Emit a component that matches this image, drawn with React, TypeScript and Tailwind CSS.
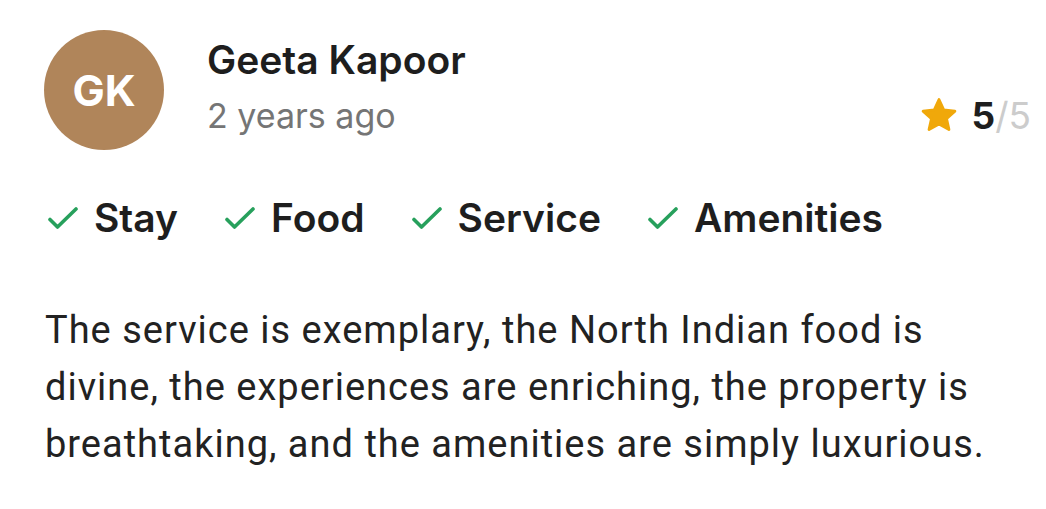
const TAGS = ['Stay', 'Food', 'Service', 'Amenities']

function Tick() {
  return (
    <svg viewBox="0 0 30 24" className="w-[30px] h-[24px] shrink-0">
      <path
        d="M2 13.5l7.5 7.5L28 3"
        fill="none"
        stroke="#27a05c"
        strokeWidth="3.6"
        strokeLinecap="round"
        strokeLinejoin="round"
      />
    </svg>
  )
}

export default function App() {
  return (
    <div className="w-[1046px] h-[509px] bg-white font-['Inter','Noto_Sans',sans-serif]">
      <div className="pl-[44px] pr-[15px] pt-[30px]">
        {/* Reviewer header */}
        <div className="flex items-start">
          <div className="w-[120px] h-[120px] rounded-full bg-[#b0855a] flex items-center justify-center shrink-0">
            <span className="text-white font-bold text-[43px] leading-none">GK</span>
          </div>
          <div className="flex-1 ml-[43px] pt-[6px]">
            <div className="text-[#1e1e1e] font-semibold text-[39px] leading-[48px]">Geeta Kapoor</div>
            <div className="flex items-center justify-between mt-[10px]">
              <span className="text-[#757575] text-[34px] leading-[44px]">2 years ago</span>
              <div className="flex items-center gap-[12px]">
                <svg viewBox="0 0 24 24" className="w-[42px] h-[42px]">
                  <path
                    d="M12 2.6l2.7 5.9 6.4.7-4.8 4.3 1.4 6.3L12 16.6l-5.7 3.2 1.4-6.3-4.8-4.3 6.4-.7z"
                    fill="#f0a80a"
                    stroke="#f0a80a"
                    strokeWidth="1.6"
                    strokeLinejoin="round"
                  />
                </svg>
                <span className="text-[37px] leading-[44px]">
                  <span className="font-bold text-[#1e1e1e]">5</span>
                  <span className="text-[#cccccc]">/5</span>
                </span>
              </div>
            </div>
          </div>
        </div>

        {/* Liked aspects */}
        <div className="flex items-center gap-[47px] mt-[44px] pl-[4px]">
          {TAGS.map((tag) => (
            <div key={tag} className="flex items-center gap-[16px]">
              <Tick />
              <span className="text-[#1e1e1e] font-semibold text-[39px] leading-[48px]">{tag}</span>
            </div>
          ))}
        </div>

        {/* Review body */}
        <p className="mt-[60px] pl-[1px] font-['Roboto',sans-serif] text-[#222222] text-[38px] tracking-[1px] leading-[57px]">
          The service is exemplary, the North Indian food is divine, the experiences are enriching, the property is breathtaking, and the amenities are simply luxurious.
        </p>
      </div>
    </div>
  )
}
